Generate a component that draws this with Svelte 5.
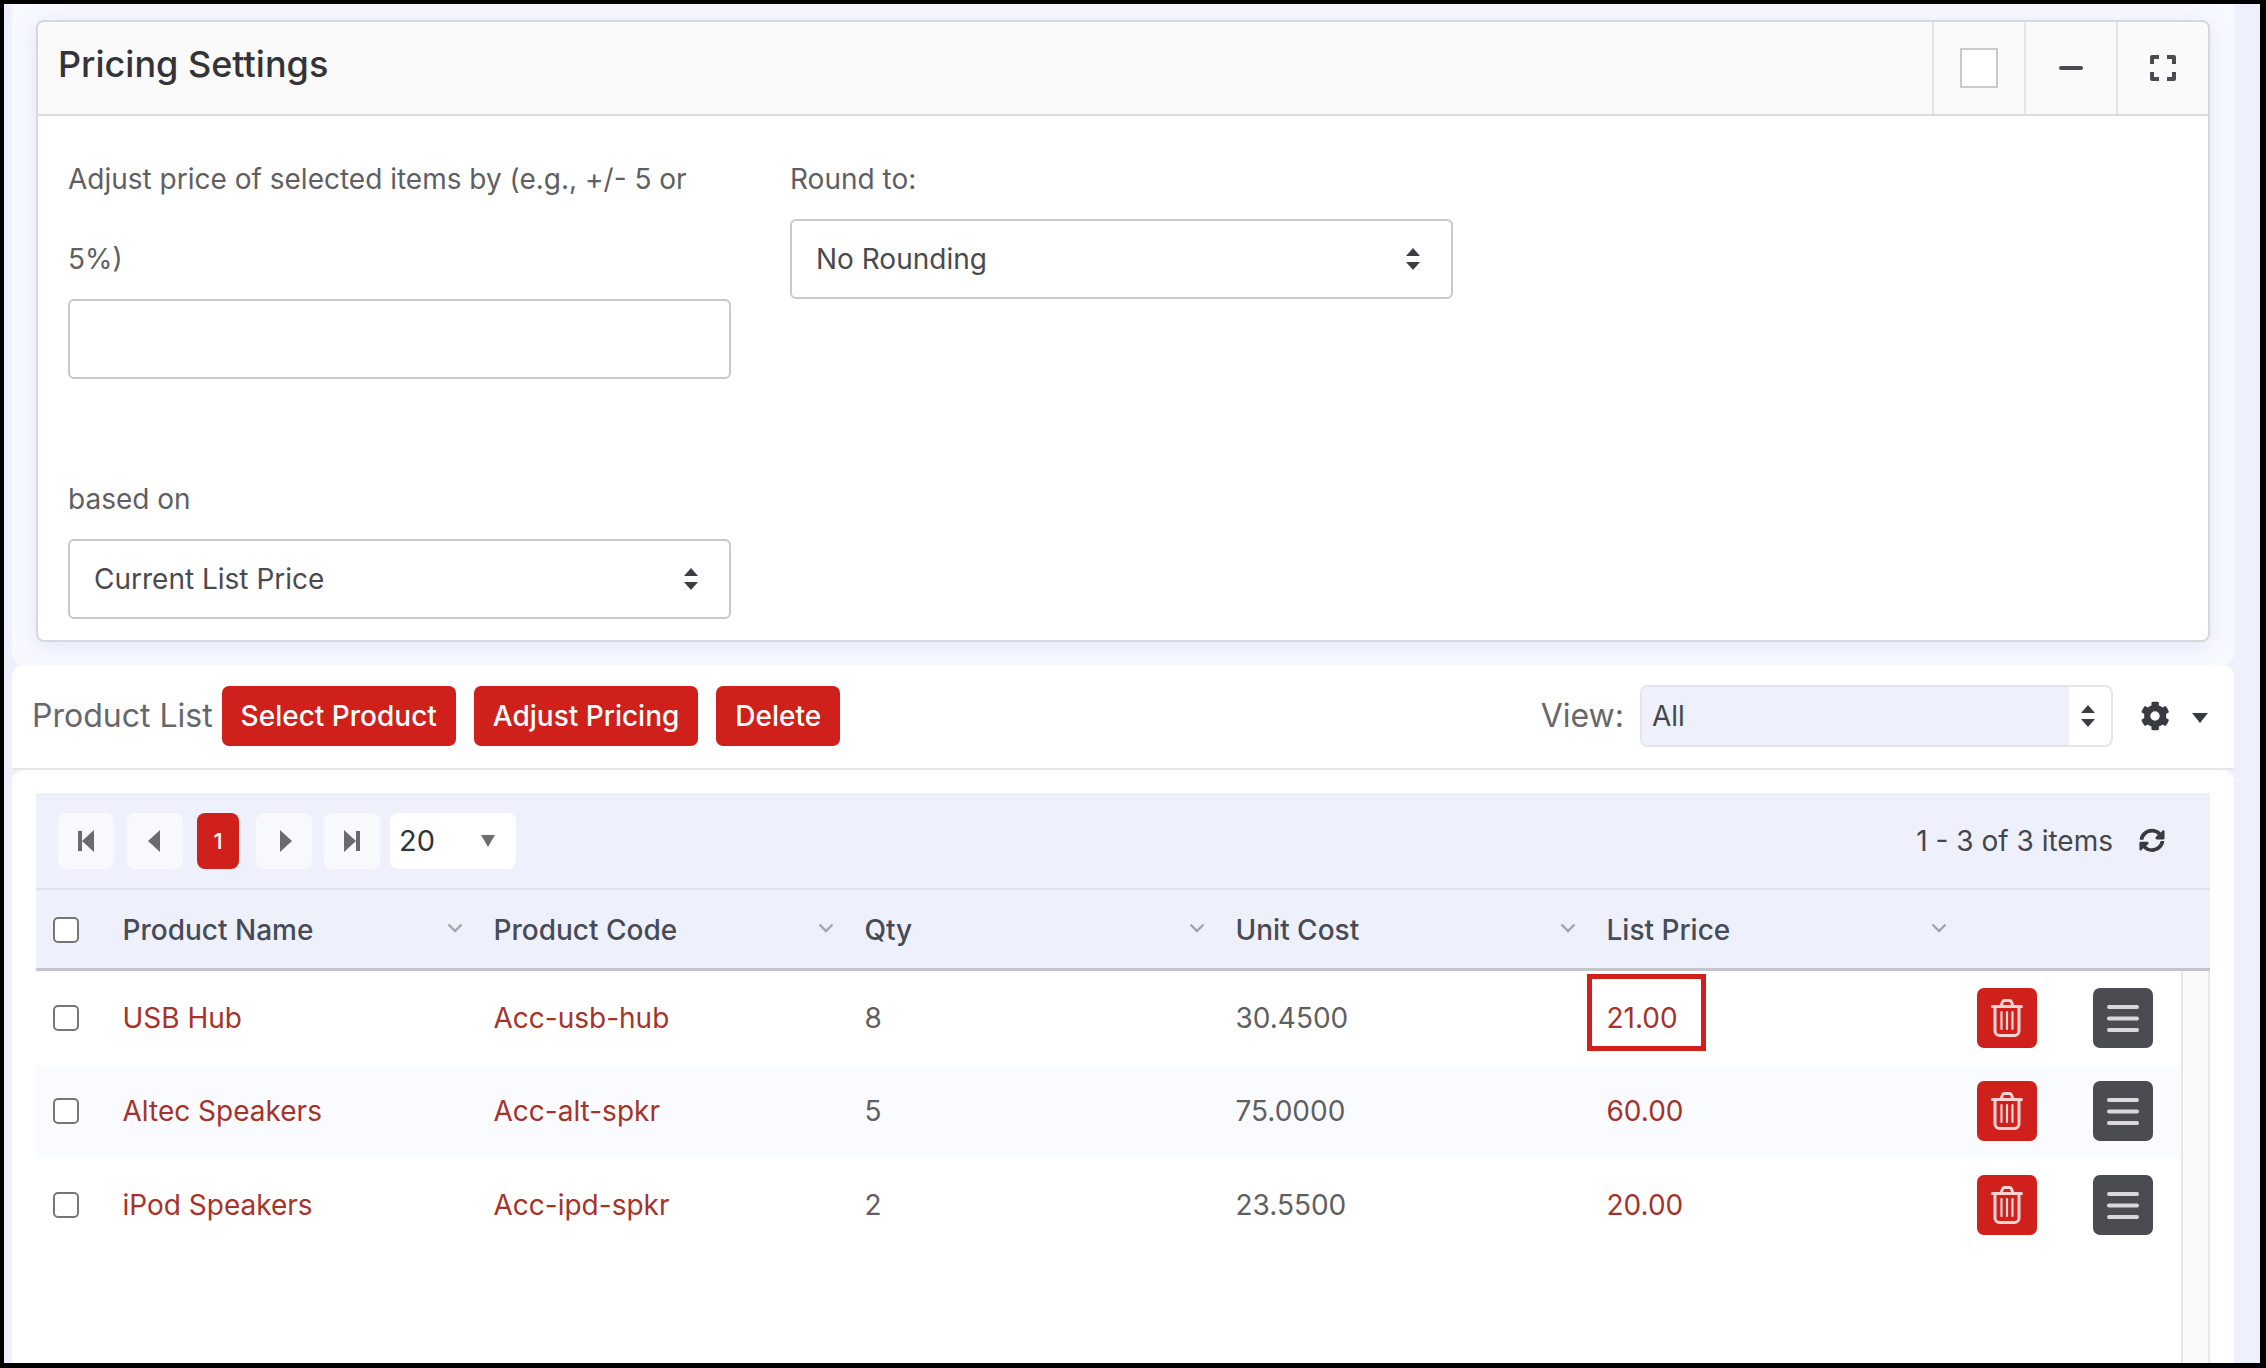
<script lang="ts">
  const rows = [
    { name: "USB Hub", code: "Acc-usb-hub", qty: 8, cost: "30.4500", price: "21.00", marked: true },
    { name: "Altec Speakers", code: "Acc-alt-spkr", qty: 5, cost: "75.0000", price: "60.00", marked: false },
    { name: "iPod Speakers", code: "Acc-ipd-spkr", qty: 2, cost: "23.5500", price: "20.00", marked: false },
  ];
  const columns = ["Product Name", "Product Code", "Qty", "Unit Cost", "List Price"];
</script>

{#snippet updown(cls)}
  <svg class={cls} viewBox="0 0 16 24" width="16" height="24" aria-hidden="true">
    <path d="M8 1l7 8H1zM8 23l-7-8h14z" fill="currentColor" />
  </svg>
{/snippet}

<div class="frame">
  <div class="page">
    <section class="settings">
      <div class="panel">
        <header class="panel_head">
          <h2>Pricing Settings</h2>
          <div class="head_btn"><span class="head_check"></span></div>
          <div class="head_btn">
            <svg viewBox="0 0 24 24" width="24" height="24" aria-hidden="true">
              <path d="M2 12h20" stroke="#4b4c52" stroke-width="4" stroke-linecap="round" />
            </svg>
          </div>
          <div class="head_btn">
            <svg viewBox="0 0 26 26" width="26" height="26" aria-hidden="true">
              <path d="M2 9V2h7M17 2h7v7M24 17v7h-7M9 24H2v-7" fill="none" stroke="#4b4c52" stroke-width="4" stroke-linejoin="round" />
            </svg>
          </div>
        </header>
        <div class="panel_body">
          <div class="form_row">
            <div class="field">
              <label for="adjust">Adjust price of selected items by (e.g., +/- 5 or 5%)</label>
              <input id="adjust" type="text" />
            </div>
            <div class="field">
              <label for="round">Round to:</label>
              <div class="select_wrap">
                <select id="round"><option>No Rounding</option></select>
                {@render updown("arrows")}
              </div>
            </div>
          </div>
          <div class="form_row second">
            <div class="field">
              <label for="basis">based on</label>
              <div class="select_wrap">
                <select id="basis"><option>Current List Price</option></select>
                {@render updown("arrows")}
              </div>
            </div>
          </div>
        </div>
      </div>
    </section>

    <div class="toolbar">
      <span class="toolbar_title">Product List</span>
      <button type="button" class="red first">Select Product</button>
      <button type="button" class="red">Adjust Pricing</button>
      <button type="button" class="red">Delete</button>
      <span class="view_label">View:</span>
      <div class="view_select">
        <span class="view_value">All</span>
        <span class="view_arrows">{@render updown("arrows_small")}</span>
      </div>
      <svg class="gear" viewBox="0 0 512 512" width="30" height="30" aria-hidden="true">
        <path fill="#3a3b40" d="M487 316l-42-25c4-23 4-47 0-70l42-25c5-3 7-9 5-14-11-35-29-66-54-92-4-4-10-5-14-2l-42 24c-18-15-38-27-60-35V29c0-6-4-10-9-11-37-8-74-8-108 0-5 1-9 5-9 11v48c-22 8-42 20-60 35L94 88c-5-3-11-2-14 2-25 26-43 57-54 92-2 5 0 11 5 14l42 25c-4 23-4 47 0 70l-42 25c-5 3-7 9-5 14 11 35 29 66 54 92 4 4 10 5 14 2l42-24c18 15 38 27 60 35v48c0 6 4 10 9 11 37 8 74 8 108 0 5-1 9-5 9-11v-48c22-8 42-20 60-35l42 24c5 3 11 2 14-2 25-26 43-57 54-92 2-5 0-11-5-14zM256 336a80 80 0 1 1 0-160 80 80 0 0 1 0 160z" />
      </svg>
      <svg class="caret" viewBox="0 0 16 10" width="16" height="10" aria-hidden="true">
        <path d="M0 0h16L8 10z" fill="#3a3b40" />
      </svg>
    </div>

    <div class="grid_card">
      <div class="grid">
        <div class="pager">
          <button type="button" class="page_btn" aria-label="First page">
            <svg viewBox="0 0 18 22" width="18" height="22"><path d="M1 1h4v20H1zM17 0v22L5 11z" fill="#6a6b71" /></svg>
          </button>
          <button type="button" class="page_btn second_btn" aria-label="Previous page">
            <svg viewBox="0 0 12 22" width="12" height="22"><path d="M12 0v22L0 11z" fill="#6a6b71" /></svg>
          </button>
          <span class="page_num">1</span>
          <button type="button" class="page_btn next_btn" aria-label="Next page">
            <svg viewBox="0 0 12 22" width="12" height="22"><path d="M0 0v22l12-11z" fill="#6a6b71" /></svg>
          </button>
          <button type="button" class="page_btn last_btn" aria-label="Last page">
            <svg viewBox="0 0 18 22" width="18" height="22"><path d="M13 1h4v20h-4zM1 0v22l12-11z" fill="#6a6b71" /></svg>
          </button>
          <div class="page_size">
            <span>20</span>
            <svg viewBox="0 0 14 12" width="14" height="12"><path d="M0 0h14L7 12z" fill="#6f6d6a" /></svg>
          </div>
          <span class="count">1 - 3 of 3 items</span>
          <svg class="refresh" viewBox="0 0 512 512" width="26" height="26" aria-hidden="true">
            <path fill="#3a3b40" d="M370 133c-30-28-70-45-114-45-82 0-148 57-166 132-1 5-6 9-12 9H24c-8 0-13-7-12-14C33 101 135 16 256 16c67 0 127 27 171 71l35-35c15-15 41-4 41 17v132c0 13-11 24-24 24H347c-21 0-32-26-17-41zM33 272h132c21 0 32 26 17 41l-41 41c30 28 70 45 114 45 82 0 148-57 166-132 1-5 6-9 12-9h54c8 0 13 7 12 14-21 114-123 199-244 199-67 0-127-27-171-71l-35 35c-15 15-41 4-41-17V296c0-13 11-24 24-24z" />
          </svg>
        </div>

        <div class="grid_row head">
          <div class="check_cell"><input type="checkbox" /></div>
          {#each columns as col}
            <div class="head_cell">
              <span>{col}</span>
              <svg viewBox="0 0 16 10" width="16" height="10" aria-hidden="true">
                <path d="M1.500 1.500L8 8l6.500-6.500" fill="none" stroke="#a3a5ab" stroke-width="2.4" />
              </svg>
            </div>
          {/each}
        </div>

        <div class="grid_body">
          <div class="rows">
            {#each rows as row, i}
              <div class="grid_row item" class:alt={i === 1}>
                <div class="check_cell"><input type="checkbox" /></div>
                <div class="cell link">{row.name}</div>
                <div class="cell link">{row.code}</div>
                <div class="cell">{row.qty}</div>
                <div class="cell">{row.cost}</div>
                <div class="cell link">
                  <span class="price">
                    {row.price}
                    {#if row.marked}<span class="mark"></span>{/if}
                  </span>
                </div>
                <div class="del_cell">
                  <button type="button" class="icon_btn del" aria-label="Delete row">
                    <svg viewBox="0 0 32 38" width="32" height="38">
                      <g fill="none" stroke="#f9d3d1" stroke-width="3" stroke-linecap="round" stroke-linejoin="round">
                        <path d="M1.500 7.500h29" />
                        <path d="M10 7l1.600-4.200c.3-.8 1-1.300 1.900-1.300h5c.9 0 1.600.5 1.900 1.300L22 7" />
                        <path d="M4 8v24c0 2.500 2 4.500 4.500 4.500h15c2.500 0 4.500-2 4.500-4.500V8" />
                      </g>
                      <path d="M10.500 13v17M16 13v17M21.500 13v17" fill="none" stroke="#f9d3d1" stroke-width="2.200" stroke-linecap="round" />
                    </svg>
                  </button>
                </div>
                <div class="menu_cell">
                  <button type="button" class="icon_btn menu" aria-label="Row menu">
                    <svg viewBox="0 0 32 28" width="32" height="28">
                      <path d="M2 3h28M2 14.500h28M2 26h28" stroke="#d9d9dc" stroke-width="4" stroke-linecap="round" />
                    </svg>
                  </button>
                </div>
              </div>
            {/each}
          </div>
          <div class="track"></div>
        </div>
      </div>
    </div>
  </div>
</div>

<style>
  :global(body) {
    background: #000;
    font-family: Inter, "Liberation Sans", sans-serif;
  }

  .frame {
    box-sizing: border-box;
    width: 2266px;
    height: 1368px;
    padding: 4px 6px 5px 4px;
    background: #000;
  }

  .page {
    height: 1359px;
    overflow: hidden;
    padding: 0 26px 0 8px;
    background: #eef1fb;
    font-size: 28px;
    color: #5f5f63;
  }

  .settings {
    height: 661px;
    box-sizing: border-box;
    padding: 16px 24px 0;
    overflow: hidden;
    background: #f8f9ff;
    border-radius: 0 0 12px 12px;
  }

  .panel {
    width: 2174px;
    box-sizing: border-box;
    margin-right: -10px;
    background: #fff;
    border: 2px solid #d6d7df;
    border-radius: 8px;
    box-shadow: 0 4px 24px rgba(95, 115, 215, 0.14);
  }

  .panel_head {
    display: flex;
    align-items: stretch;
    height: 94px;
    box-sizing: border-box;
    background: #fafafa;
    border-bottom: 2px solid #dcdce0;
    border-radius: 8px 8px 0 0;
  }

  h2 {
    flex: 1;
    margin: 0;
    padding: 20px 0 0 20px;
    font-size: 36px;
    font-weight: 500;
    line-height: 44px;
    color: #333338;
  }

  .head_btn {
    width: 92px;
    box-sizing: border-box;
    display: flex;
    align-items: center;
    justify-content: center;
    border-left: 2px solid #e4e4e7;
  }

  .head_check {
    width: 38px;
    height: 40px;
    background: #fff;
    border: 2px solid #c9c9c9;
    box-sizing: border-box;
  }

  .panel_body {
    padding: 23px 30px 21px;
  }

  .form_row {
    display: flex;
    gap: 59px;
  }

  .form_row.second {
    margin-top: 80px;
  }

  .field {
    width: 663px;
  }

  label {
    display: block;
    line-height: 80px;
  }

  input[type="text"],
  select {
    display: block;
    box-sizing: border-box;
    width: 100%;
    height: 80px;
    padding: 0 24px;
    font: inherit;
    color: #4a4a4e;
    background: #fff;
    border: 2px solid #c9c9cb;
    border-radius: 6px;
    appearance: none;
  }

  .select_wrap {
    position: relative;
  }

  .arrows {
    position: absolute;
    right: 32px;
    top: 28px;
    color: #3d3e44;
  }

  .toolbar {
    display: flex;
    align-items: center;
    height: 105px;
    box-sizing: border-box;
    padding: 19px 26px 21px 20px;
    background: #fff;
    border-top-left-radius: 12px;
    border-top-right-radius: 12px;
    border-bottom: 2px solid #e6e6e6;
  }

  .toolbar_title {
    font-size: 32px;
    color: #67676b;
  }

  button {
    font-family: inherit;
    cursor: pointer;
  }

  .red {
    height: 60px;
    margin-left: 18px;
    padding: 0 19px;
    font-size: 28px;
    font-weight: 500;
    color: #fff;
    background: #cf201c;
    border: 0;
    border-radius: 7px;
  }

  .red.first {
    margin-left: 9px;
  }

  .view_label {
    margin-left: auto;
    margin-right: 16px;
    font-size: 32px;
    color: #67676b;
  }

  .view_select {
    display: flex;
    width: 473px;
    height: 62px;
    box-sizing: border-box;
    border: 2px solid #e4e5e8;
    border-radius: 8px;
    background: #fff;
    overflow: hidden;
  }

  .view_value {
    flex: 1;
    padding-left: 10px;
    line-height: 58px;
    color: #45474f;
    background: #eef1fb;
  }

  .view_arrows {
    width: 46px;
    display: flex;
    align-items: center;
    justify-content: center;
    color: #3d3e44;
    margin-left: -4px;
  }

  .gear {
    margin-left: 27px;
  }

  .caret {
    margin-left: 22px;
    margin-top: 5px;
  }

  .grid_card {
    padding: 23px 24px 0;
    background: #fff;
    height: 600px;
    border-radius: 12px 12px 0 0;
  }

  .grid {
    width: 2174px;
  }

  .pager {
    display: flex;
    align-items: center;
    height: 97px;
    box-sizing: border-box;
    padding: 0 0 0 22px;
    background: #eef1fb;
    border-bottom: 2px solid #dde1f3;
  }

  .page_btn {
    width: 56px;
    height: 56px;
    display: flex;
    align-items: center;
    justify-content: center;
    padding: 0;
    background: #f8f9fd;
    border: 0;
    border-radius: 8px;
  }

  .page_btn svg {
    flex: none;
  }

  .second_btn svg {
    margin-right: 3px;
  }

  .next_btn svg {
    margin-left: 3px;
  }

  .second_btn {
    margin-left: 13px;
  }

  .next_btn {
    margin-left: 17px;
  }

  .last_btn {
    margin-left: 12px;
  }

  .page_num {
    width: 42px;
    height: 56px;
    margin-left: 14px;
    font-size: 22px;
    font-weight: 500;
    line-height: 56px;
    text-align: center;
    color: #fff;
    background: #cf201c;
    border-radius: 8px;
  }

  .page_size {
    display: flex;
    align-items: center;
    justify-content: space-between;
    width: 126px;
    height: 56px;
    box-sizing: border-box;
    margin-left: 10px;
    padding: 0 21px 0 9px;
    font-size: 29px;
    color: #333338;
    background: #fff;
    border-radius: 8px;
  }

  .count {
    margin-left: auto;
    margin-right: 26px;
    font-size: 28px;
    color: #44464e;
  }

  .refresh {
    margin-right: 45px;
  }

  .grid_row {
    display: grid;
    grid-template-columns: 75px repeat(5, 371px) 99px 1fr;
    align-items: center;
  }

  .head {
    box-sizing: border-box;
    height: 81px;
    padding-top: 2px;
    background: #eef1fb;
    border-bottom: 3px solid #c4c5cc;
  }

  .head_cell {
    display: flex;
    align-items: center;
    justify-content: space-between;
    padding: 0 19px 0 11.500px;
    font-weight: 500;
    color: #474b57;
  }

  .head_cell svg {
    margin-top: -4px;
  }

  .check_cell {
    padding-left: 17px;
    display: flex;
  }

  input[type="checkbox"] {
    width: 26px;
    height: 26px;
    margin: 0;
    appearance: none;
    background: #fff;
    border: 2px solid #767676;
    border-radius: 5px;
  }

  .grid_body {
    display: flex;
  }

  .rows {
    width: 2145px;
  }

  .track {
    flex: 1;
    height: 420px;
    background: #fafafa;
    border-left: 2px solid #e8e8ea;
    border-right: 2px solid #e8e8ea;
    box-sizing: border-box;
  }

  .item {
    height: 93.500px;
  }

  .item.alt {
    background: #fafbff;
  }

  .cell {
    padding-left: 11.500px;
    color: #5f5f63;
  }

  .cell.link {
    color: #a5332a;
  }

  .price {
    position: relative;
    display: inline-block;
  }

  .mark {
    position: absolute;
    left: -20px;
    top: -27px;
    width: 119px;
    height: 77px;
    box-sizing: border-box;
    border: 5px solid #cf201c;
  }

  .del_cell {
    padding-left: 11px;
  }

  .menu_cell {
    display: flex;
    justify-content: center;
  }

  .icon_btn {
    display: flex;
    align-items: center;
    justify-content: center;
    width: 60px;
    height: 60px;
    padding: 0;
    border: 0;
    border-radius: 7px;
  }

  .del {
    background: #cf201c;
  }

  .menu {
    background: #4b4c52;
  }
</style>
